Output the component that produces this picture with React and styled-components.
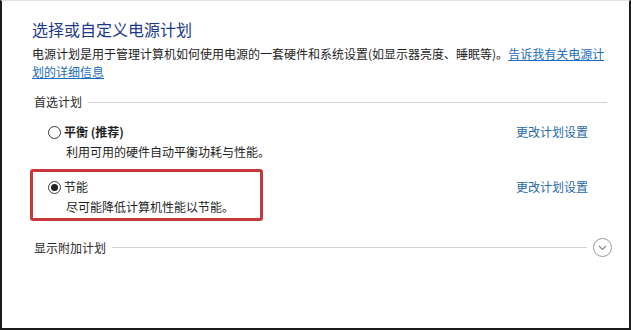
import styled, { createGlobalStyle } from 'styled-components'

const GlobalStyle = createGlobalStyle`
  body {
    margin: 0;
    background: #fff;
    font-family: "Noto Sans CJK SC", "Liberation Sans", sans-serif;
  }
`;

const Frame = styled.div`
  box-sizing: border-box;
  width: 631px;
  height: 330px;
  border-top: 1px solid #e2e2e2;
  border-left: 2px solid #1c1c1c;
  border-right: 2px solid #1c1c1c;
  border-bottom: 2px solid #1c1c1c;
  padding: 18px 24px 0 28px;
  color: #1e1e1e;
`;

const Title = styled.h1`
  margin: 0 0 6px 2px;
  font-size: 16px;
  line-height: 20px;
  font-weight: normal;
  color: #1d3a8a;
`;

const Intro = styled.p`
  margin: 0 0 12px 2px;
  width: 578px;
  font-size: 12px;
  line-height: 18px;
`;

const TextLink = styled.a`
  color: #1c6cc0;
  text-decoration: ${p => (p.$underline ? 'underline' : 'none')};
  cursor: pointer;
`;

const Section = styled.div`
  display: flex;
  align-items: center;
  gap: ${p => p.$gap}px;
  margin: ${p => p.$top || 0}px 0 0 4px;
  width: ${p => p.$width}px;
  font-size: 12px;
  line-height: 18px;
  color: #2a2a2a;
`;

const Rule = styled.div`
  flex: 1;
  height: 1px;
  background: #d2d2d2;
`;

const PlanRow = styled.div`
  display: flex;
  justify-content: space-between;
  align-items: flex-start;
  width: 558px;
  margin-top: 3px;
`;

const PlanBox = styled.div`
  box-sizing: border-box;
  width: 233px;
  padding: 6px 0 2px 15px;
  border: 3px solid ${p => (p.$selected ? '#c8373a' : 'transparent')};
  border-radius: 3px;
  white-space: nowrap;
`;

const PlanHead = styled.label`
  display: flex;
  align-items: center;
  gap: 3px;
  font-size: 12px;
  line-height: 18px;
  font-weight: ${p => (p.$bold ? 'bold' : 'normal')};
`;

const Radio = styled.span`
  box-sizing: border-box;
  width: 13px;
  height: 13px;
  border: 1px solid #3a3a3a;
  border-radius: 50%;
  display: flex;
  align-items: center;
  justify-content: center;
  background: #fff;

  &::after {
    content: '';
    width: 7px;
    height: 7px;
    border-radius: 50%;
    background: ${p => (p.$checked ? '#222' : 'transparent')};
  }
`;

const PlanDesc = styled.div`
  margin: 2px 0 0 18px;
  font-size: 12px;
  line-height: 18px;
`;

const SettingsLink = styled(TextLink)`
  margin-top: 9px;
  font-size: 12px;
  line-height: 18px;
  color: #1f6aa8;
`;

const Expand = styled.span`
  box-sizing: border-box;
  width: 19px;
  height: 19px;
  border: 1px solid #9a9a9a;
  border-radius: 50%;
  display: flex;
  align-items: center;
  justify-content: center;
`;

const plans = [
  { name: '平衡 (推荐)', desc: '利用可用的硬件自动平衡功耗与性能。', bold: true, selected: false },
  { name: '节能', desc: '尽可能降低计算机性能以节能。', bold: false, selected: true },
];

export default function App() {
  return (
    <>
      <GlobalStyle />
      <Frame>
        <Title>选择或自定义电源计划</Title>
        <Intro>
          电源计划是用于管理计算机如何使用电源的一套硬件和系统设置(如显示器亮度、睡眠等)。
          <TextLink $underline>告诉我有关电源计划的详细信息</TextLink>
        </Intro>
        <Section $gap={6} $width={573}>
          首选计划
          <Rule />
        </Section>
        {plans.map(plan => (
          <PlanRow key={plan.name}>
            <PlanBox $selected={plan.selected}>
              <PlanHead $bold={plan.bold}>
                <Radio $checked={plan.selected} />
                {plan.name}
              </PlanHead>
              <PlanDesc>{plan.desc}</PlanDesc>
            </PlanBox>
            <SettingsLink>更改计划设置</SettingsLink>
          </PlanRow>
        ))}
        <Section $gap={6} $width={578} $top={17}>
          显示附加计划
          <Rule />
          <Expand>
            <svg width="9" height="6" viewBox="0 0 9 6">
              <path d="M1 1 L4.5 4.5 L8 1" fill="none" stroke="#8a8a8a" strokeWidth="1.2" />
            </svg>
          </Expand>
        </Section>
      </Frame>
    </>
  );
}
